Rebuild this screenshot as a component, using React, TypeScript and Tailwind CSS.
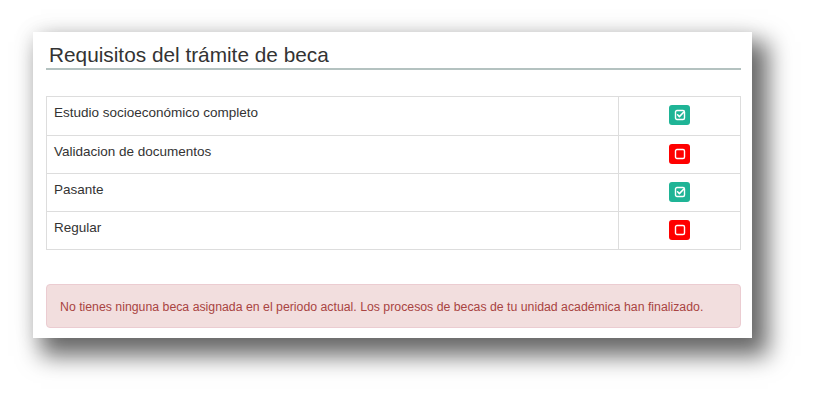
import React from 'react';

type Requisito = { label: string; ok: boolean };

const requisitos: Requisito[] = [
  { label: 'Estudio socioeconómico completo', ok: true },
  { label: 'Validacion de documentos', ok: false },
  { label: 'Pasante', ok: true },
  { label: 'Regular', ok: false },
];

const StatusIcon: React.FC<{ ok: boolean }> = ({ ok }) => (
  <span
    className={`flex h-[20px] w-[21px] items-center justify-center rounded-[3px] ${
      ok ? 'bg-[#1fb496]' : 'bg-[#ff0000]'
    }`}
  >
    <svg width="12" height="12" viewBox="0 0 12 12" fill="none">
      <rect x="1.5" y="1.5" width="9" height="9" rx="1.5" stroke="white" strokeWidth="1.4" />
      {ok && (
        <path d="M3.6 5.8 L5.4 7.6 L9.6 3.2" stroke="white" strokeWidth="1.6" strokeLinecap="round" strokeLinejoin="round" />
      )}
    </svg>
  </span>
);

export default function App() {
  return (
    <div className="h-[404px] w-[817px] overflow-hidden bg-white pl-[33px] pt-[32px]" style={{ fontFamily: '"Liberation Sans", Arial, sans-serif' }}>
      <div className="flex h-[306px] w-[719px] flex-col bg-white pl-[13px] pr-[11px] pt-[11px] shadow-[12px_14px_22px_4px_rgba(0,0,0,0.58),0_0_22px_rgba(0,0,0,0.08)]">
        <div className="border-b-2 border-[#b4c2c0] pb-[1px] pl-[3px]">
          <h3 className="text-[20.8px] leading-[24px] text-[#333]">Requisitos del trámite de beca</h3>
        </div>

        <div className="mt-[26px] border border-[#dddddd] text-[13.5px] leading-[20px] text-[#333]">
          {requisitos.map((r, i) => (
            <div key={r.label} className={`flex h-[38px] ${i > 0 ? 'border-t border-[#dddddd]' : ''}`}>
              <div className="flex-1 pl-[7px] pt-[6px]">{r.label}</div>
              <div className="flex w-[122px] justify-center border-l border-[#dddddd] pt-[8px]">
                <StatusIcon ok={r.ok} />
              </div>
            </div>
          ))}
        </div>

        <div className="mt-[34px] flex h-[44px] items-center whitespace-nowrap rounded-[4px] border border-[#ebccd1] bg-[#f2dede] px-[13px] pt-[2px] text-[12.3px] text-[#a94442]">
          No tienes ninguna beca asignada en el periodo actual. Los procesos de becas de tu unidad académica han finalizado.
        </div>
      </div>
    </div>
  );
}
